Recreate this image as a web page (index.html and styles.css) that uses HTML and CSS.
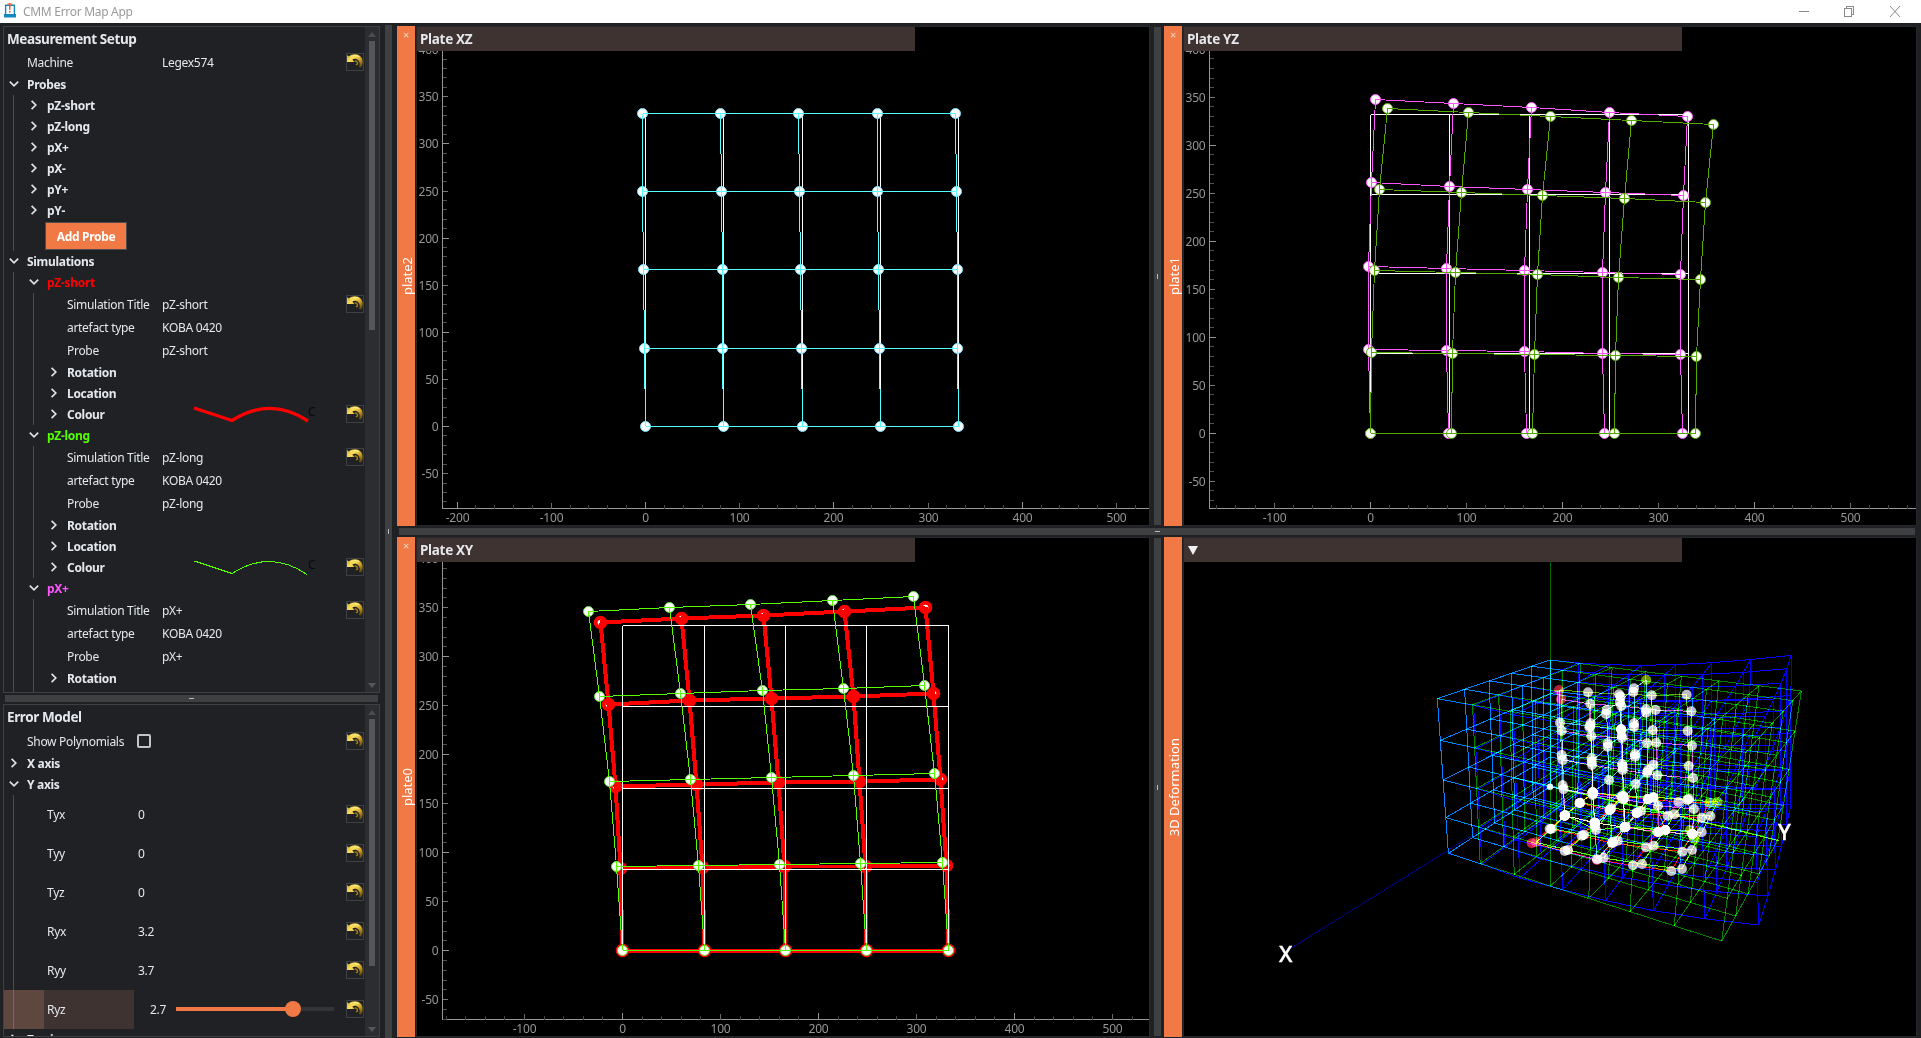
FILE: index.html
```html
<!DOCTYPE html>
<html lang="en">
<head>
<meta charset="utf-8">
<title>CMM Error Map App</title>
<link rel="stylesheet" href="styles.css">
</head>
<body>
<svg class="defs" width="0" height="0">
  <defs>
    <linearGradient id="gold" x1="0" y1="0" x2="1" y2="1">
      <stop offset="0" stop-color="#d9a91c"/><stop offset=".35" stop-color="#f9de5e"/><stop offset=".65" stop-color="#c9991a"/><stop offset="1" stop-color="#3a2c0c"/>
    </linearGradient>
    <symbol id="undo" viewBox="0 0 16 16">
      <path d="M0 1 L1.800 2.600 C5 -.6 10.500 -.6 13.500 2.400 C16.400 5.600 16.400 10.500 14 13.500 L12 13 C13.600 10 12.600 6.600 9.800 5.200 C8.400 4.500 6.600 4.600 5.400 5.600 L7.400 8 L0 8 Z" fill="url(#gold)"/>
      <path d="M3.200 3.200 C6 1 10 1 12.200 3.200" fill="none" stroke="#ffee8a" stroke-width="1"/>
      <path d="M7.600 7.200 C9.600 6.600 11 8.400 10.400 10 L9 11" fill="none" stroke="#a27b16" stroke-width="1.500"/>
    </symbol>
    <symbol id="down" viewBox="0 0 10 10"><path d="M.8 2.6 L5 6.8 L9.2 2.6" fill="none" stroke="#e0e1e3" stroke-width="1.7"/></symbol>
    <symbol id="right" viewBox="0 0 10 10"><path d="M2.6 .8 L6.8 5 L2.6 9.2" fill="none" stroke="#e0e1e3" stroke-width="1.7"/></symbol>
  </defs>
</svg>

<header class="titlebar">
  <svg class="appicon" width="12" height="15" viewBox="0 0 12 15">
    <path d="M0 11h12v3.5H0z" fill="#1689c0"/><path d="M1.6 11V2.2h8.8V11" fill="none" stroke="#1689c0" stroke-width="1.4"/>
    <path d="M4.9 0h1.8l-.3 7h-1.2zM5 8h1.6v1.6H5z" fill="#e8502a"/><path d="M3.4 1.2h4.8" stroke="#f07945" stroke-width="1.6"/>
  </svg>
  <span class="apptitle">CMM Error Map App</span>
  <svg class="winbtns" width="102" height="14" viewBox="0 0 102 14" fill="none" stroke="#8a8a8a" shape-rendering="crispEdges">
    <path d="M0 7.5h10"/><path d="M45.5 4.500h7v8h-7zM47.500 4.500v-2h7v8h-2"/><path d="M91 2l10 11M101 2l-10 11" shape-rendering="auto"/>
  </svg>
</header>

<main class="workspace">
  <section class="side">
    <div class="box setup">
      <div class="tree">
        <h2>Measurement Setup</h2>
        <div class="row"><span class="name">Machine</span><span>Legex574</span><svg class="undo"><use href="#undo"/></svg></div>
        <div class="group"><svg class="chev"><use href="#down"/></svg>Probes</div>
        <div class="kids">
          <div class="group"><svg class="chev"><use href="#right"/></svg>pZ-short</div>
          <div class="group"><svg class="chev"><use href="#right"/></svg>pZ-long</div>
          <div class="group"><svg class="chev"><use href="#right"/></svg>pX+</div>
          <div class="group"><svg class="chev"><use href="#right"/></svg>pX-</div>
          <div class="group"><svg class="chev"><use href="#right"/></svg>pY+</div>
          <div class="group"><svg class="chev"><use href="#right"/></svg>pY-</div>
          <div class="btnrow"><button class="add">Add Probe</button></div>
        </div>
        <div class="group"><svg class="chev"><use href="#down"/></svg>Simulations</div>
        <div class="kids">
          <div class="group red"><svg class="chev"><use href="#down"/></svg>pZ-short</div>
          <div class="kids deep">
            <div class="row"><span class="name">Simulation Title</span><span>pZ-short</span><svg class="undo"><use href="#undo"/></svg></div>
            <div class="row"><span class="name">artefact type</span><span>KOBA 0420</span></div>
            <div class="row"><span class="name">Probe</span><span>pZ-short</span></div>
            <div class="group"><svg class="chev"><use href="#right"/></svg>Rotation</div>
            <div class="group"><svg class="chev"><use href="#right"/></svg>Location</div>
            <div class="group"><svg class="chev"><use href="#right"/></svg><span class="name">Colour</span><svg class="pen" width="118" height="18" viewBox="0 0 118 18"><path d="M2 3 L40 15.500 Q78 -9 116 16" fill="none" stroke="#f00" stroke-width="3.400"/></svg><span class="pen-c">C</span><svg class="undo"><use href="#undo"/></svg></div>
          </div>
          <div class="group green"><svg class="chev"><use href="#down"/></svg>pZ-long</div>
          <div class="kids deep">
            <div class="row"><span class="name">Simulation Title</span><span>pZ-long</span><svg class="undo"><use href="#undo"/></svg></div>
            <div class="row"><span class="name">artefact type</span><span>KOBA 0420</span></div>
            <div class="row"><span class="name">Probe</span><span>pZ-long</span></div>
            <div class="group"><svg class="chev"><use href="#right"/></svg>Rotation</div>
            <div class="group"><svg class="chev"><use href="#right"/></svg>Location</div>
            <div class="group"><svg class="chev"><use href="#right"/></svg><span class="name">Colour</span><svg class="pen" width="118" height="18" viewBox="0 0 118 18" shape-rendering="crispEdges"><path d="M2.500 3 L40 15.500 Q78 -9 115 16.500" fill="none" stroke="#5f0" stroke-width="1"/></svg><span class="pen-c">C</span><svg class="undo"><use href="#undo"/></svg></div>
          </div>
          <div class="group pink"><svg class="chev"><use href="#down"/></svg>pX+</div>
          <div class="kids deep">
            <div class="row"><span class="name">Simulation Title</span><span>pX+</span><svg class="undo"><use href="#undo"/></svg></div>
            <div class="row"><span class="name">artefact type</span><span>KOBA 0420</span></div>
            <div class="row"><span class="name">Probe</span><span>pX+</span></div>
            <div class="group"><svg class="chev"><use href="#right"/></svg>Rotation</div>
            <div class="group"></div>
          </div>
        </div>
      </div>
      <div class="scroll"><i class="up"></i><b class="thumb t1"></b><i class="dn"></i></div>
    </div>
    <div class="hsplit"><i></i></div>
    <div class="box model">
      <div class="tree">
        <h2>Error Model</h2>
        <div class="row"><span class="name">Show Polynomials</span><span class="check"></span><svg class="undo"><use href="#undo"/></svg></div>
        <div class="group"><svg class="chev"><use href="#right"/></svg>X axis</div>
        <div class="group"><svg class="chev"><use href="#down"/></svg>Y axis</div>
        <div class="kids">
          <div class="row tall"><span class="name">Tyx</span><span>0</span><svg class="undo"><use href="#undo"/></svg></div>
          <div class="row tall"><span class="name">Tyy</span><span>0</span><svg class="undo"><use href="#undo"/></svg></div>
          <div class="row tall"><span class="name">Tyz</span><span>0</span><svg class="undo"><use href="#undo"/></svg></div>
          <div class="row tall"><span class="name">Ryx</span><span>3.2</span><svg class="undo"><use href="#undo"/></svg></div>
          <div class="row tall"><span class="name">Ryy</span><span>3.7</span><svg class="undo"><use href="#undo"/></svg></div>
          <div class="row tall selected"><span class="name">Ryz</span><span class="num">2.7</span><span class="slider"><i class="fill"></i><i class="knob"></i></span><svg class="undo"><use href="#undo"/></svg></div>
        </div>
        <div class="group"><svg class="chev"><use href="#right"/></svg>Z axis</div>
      </div>
      <div class="scroll"><i class="up"></i><b class="thumb t2"></b><i class="dn"></i></div>
    </div>
  </section>
  <div class="vsplit main"><i></i></div>
  <section class="docks">
    <div class="dockrow">
      <article class="dock"><div class="tab"><span class="x">×</span><span class="label">plate2</span></div>
        <div class="view"><svg id="xz" viewBox="417 27 732 498"></svg><div class="caption">Plate XZ</div></div></article>
      <div class="vsplit"><i></i></div>
      <article class="dock"><div class="tab"><span class="x">×</span><span class="label">plate1</span></div>
        <div class="view"><svg id="yz" viewBox="1184 27 732 498"></svg><div class="caption">Plate YZ</div></div></article>
    </div>
    <div class="hsplit wide"><i></i></div>
    <div class="dockrow">
      <article class="dock"><div class="tab"><span class="x">×</span><span class="label">plate0</span></div>
        <div class="view"><svg id="xy" viewBox="417 538 732 498"></svg><div class="caption">Plate XY</div></div></article>
      <div class="vsplit"><i></i></div>
      <article class="dock"><div class="tab"><span class="label">3D Deformation</span></div>
        <div class="view"><svg id="space" class="space" viewBox="1184 538 732 498"></svg><div class="caption"><i class="tri"></i></div></div></article>
    </div>
  </section>
</main>
<script src="plots.js"></script>
</body>
</html>
```
FILE: styles.css
```css
* { box-sizing: border-box; }
body { margin: 0; width: 1921px; height: 1038px; overflow: hidden; background: #202124; color: #e4e7eb; font: 12px/15px "Noto Sans", "Open Sans", sans-serif; letter-spacing: -0.3px; }
.defs { position: absolute; }
.titlebar { height: 23px; background: #fff; display: flex; align-items: center; padding: 0 20px 0 4px; }
.appicon { margin-right: 7px; margin-top: -2px; }
.apptitle { color: #999; flex: 1; }
.winbtns { display: block; margin-top: -2px; }

.workspace { display: flex; height: 1015px; padding: 3px 0 0 3px; }
.side { width: 377px; display: flex; flex-direction: column; }
.box { border: 1px solid #3f4042; display: flex; overflow: hidden; }
.setup { height: 667px; --col: 135px; }
.model { height: 333px; --col: 111px; margin-top: 2px; }
.model h2 { height: 25px; }
.tree { flex: 1; min-width: 0; }
h2 { margin: 0; font-size: 13.500px; line-height: 24px; height: 24px; padding-left: 3px; font-weight: 700; letter-spacing: -0.4px; }
.row, .group { display: flex; align-items: center; white-space: nowrap; padding-bottom: 1px; }
.row { height: 23px; padding-left: 23px; }
.tall { height: 39px; }
.group { height: 21px; padding-left: 5px; font-weight: 700; }
.name { width: var(--col); flex: none; }
.chev { width: 10px; height: 10px; margin-right: 8px; flex: none; }
.undo { width: 18px; height: 18px; margin: 0 1px 0 auto; border: 1px solid #3f4042; flex: none; }
.kids { margin-left: 9px; padding-left: 10px; border-left: 1px solid #4b4c4e; }
.kids .name { width: calc(var(--col) - 20px); }
.deep .name { width: calc(var(--col) - 40px); }
.btnrow { height: 30px; padding: 1px 0 0 21px; }
.add { display: block; width: 82px; height: 28px; border: 1px solid #4b4c4e; background: #f07945; color: #fff; font: inherit; letter-spacing: inherit; font-weight: 700; padding: 0; }
.red { color: #f00; }
.green { color: #5f0; }
.pink { color: #ff55ff; }
.pen { margin-left: 30px; flex: none; }
.pen-c { color: #08090a; font-weight: 400; margin: -6px 0 0 -2px; }
.check { width: 14px; height: 14px; border: 2px solid #c2c4c8; border-radius: 2px; margin-left: -1px; }
.selected { margin-left: -20px; padding-left: 43px; background: linear-gradient(90deg, rgba(239,160,126,.3) 40px, #3f3331 40px) no-repeat 0 0 / 130px 100%; }
.num { width: 38px; padding-left: 12px; }
.slider { position: relative; width: 158px; height: 4px; background: #333437; }
.slider .fill { display: block; width: 117px; height: 4px; background: #f07945; }
.slider .knob { position: absolute; left: 109px; top: -6px; width: 16px; height: 16px; border-radius: 50%; background: #f07945; }
.scroll { width: 14px; background: #2c2d30; display: flex; flex-direction: column; align-items: center; padding: 5px 0 4px; }
.up, .dn { border: 4px solid transparent; }
.up { border-bottom-color: #4b4c4f; border-top: 0; border-bottom-width: 5px; }
.dn { border-top-color: #55565a; border-bottom: 0; border-top-width: 5px; margin-top: auto; }
.thumb { width: 6px; background: #55565a; margin-top: 4px; }
.t1 { height: 289px; }
.t2 { height: 247px; }
.hsplit, .vsplit { background: #3f4042; display: flex; align-items: center; justify-content: center; flex: none; }
.hsplit { height: 7px; margin: 2px 2px 0; }
.hsplit i { width: 5px; height: 1px; background: #b5b7ba; }
.vsplit { width: 7px; }
.vsplit i { width: 1px; height: 5px; background: #b5b7ba; }
.vsplit.main { margin: -1px 5px 0; }

.docks { width: 1520px; flex: none; }
.dockrow { display: flex; height: 500px; justify-content: space-between; }
.dockrow .vsplit { margin: 1px 0 1px 1px; }
.hsplit.wide { margin: 2px; }
.dock { width: 753px; display: flex; }
.tab { width: 18px; background: #f07945; position: relative; display: flex; align-items: center; justify-content: center; }
.label { writing-mode: vertical-rl; transform: rotate(180deg); font-size: 13px; letter-spacing: 0; color: #fff; line-height: 16px; padding-right: 1px; }
.x { position: absolute; top: 1px; left: 6px; font-size: 11px; color: #f8d8c8; }
.view { position: relative; flex: 1; margin-left: 1px; background: #000; border: 1px solid #26272a; }
.view svg { display: block; width: 732px; height: 498px; }
.caption { position: absolute; left: 0; top: 0; width: 498px; height: 24px; background: #3f3331; font-size: 13.500px; font-weight: 700; line-height: 24px; padding-left: 3px; }
.tri { display: block; margin: 8px 0 0 1px; width: 0; border: 5px solid transparent; border-top: 9px solid #eef0f2; border-bottom: 0; }
.axis { fill: none; stroke: #969696; }
.tick { font-size: 12px; fill: #969696; letter-spacing: -0.2px; }
.crisp { shape-rendering: crispEdges; }
.space .wire, .space .ball { mix-blend-mode: plus-lighter; fill: none; }
.letter { font-size: 22px; font-weight: 500; fill: #fff; stroke: #fff; stroke-width: .4px; letter-spacing: 0; }
```
FILE: plots.js
```js
const NS = "http://www.w3.org/2000/svg";
function add(parent, tag, attrs, text) {
  const e = document.createElementNS(NS, tag);
  for (const k in attrs) e.setAttribute(k, attrs[k]);
  if (text !== undefined) e.textContent = text;
  parent.appendChild(e);
  return e;
}
// measured coordinates are stored in thirds of a pixel
const grid = (ox, oy, rows) => rows.map(r => r.map(p => [ox + Math.floor(p[0] / 3) + .5, oy + Math.floor(p[1] / 3) + .5]));
const lattice = (ox, oy, xs, ys) => grid(ox, oy, ys.map(y => xs.map(x => [x, y])));
const path = pts => "M" + pts.map(p => p[0].toFixed(1) + " " + p[1].toFixed(1)).join("L");

function mesh(svg, g, color, width, cls) {
  const lines = g.concat(g[0].map((_, i) => g.map(r => r[i])));
  if (cls) lines.forEach(l => add(svg, "path", { d: path(l), stroke: color, "stroke-width": width, class: cls }));
  else add(svg, "path", { d: lines.map(path).join(""), stroke: color, "stroke-width": width, fill: "none", class: "crisp" });
}
function dots(svg, g, color, width) {
  g.flat().forEach(p => add(svg, "circle", { cx: p[0], cy: p[1], r: width > 1 ? 4.8 : 5, fill: "#fff", stroke: color, "stroke-width": width }));
}
function axes(svg, o) {
  const g = add(svg, "g", {});
  add(g, "path", { d: `M${o.left} 27V${o.bottom}H${o.right}`, class: "axis crisp" });
  for (let v = -220; v <= 600; v += 20) {
    const x = Math.floor(o.x0 + v * o.s) + .5;
    if (x < o.left || x > o.right) continue;
    const big = v % 200 === 0, mid = v % 100 === 0;
    add(g, "path", { d: `M${x} ${o.bottom}v${big ? -7 : mid ? -6 : -4}`, stroke: big ? "#969696" : mid ? "#6a6a6a" : "#444", class: "crisp" });
    if (mid) add(g, "text", { x: x, y: o.bottom + 13.5, "text-anchor": "middle", class: "tick" }, v);
  }
  for (let v = -90; v <= 450; v += 10) {
    const y = Math.floor(o.y0 - v * o.s) + .5;
    if (y > o.bottom || y < o.bottom - 465) continue;
    const big = v % 100 === 0, mid = v % 50 === 0;
    add(g, "path", { d: `M${o.left} ${y}h${big ? 6 : mid ? 5 : 4}`, stroke: big ? "#969696" : mid ? "#777" : "#505050", class: "crisp" });
    if (mid) add(g, "text", { x: o.left - 4, y: y + 4.5, "text-anchor": "end", class: "tick" }, v);
  }
}

const xz = document.getElementById("xz");
axes(xz, { left: 442.5, bottom: 508.5, right: 1149, x0: 645.5, y0: 426.5, s: .942 });
mesh(xz, lattice(620, 90, [76, 310, 547, 781, 1015], [70, 304, 538, 775, 1009]), "#fff", 1);
const cyan = grid(620, 90, [
  [[67,70],[301,70],[535,70],[772,70],[1006,70]],
  [[67,304],[304,304],[538,304],[772,304],[1009,304]],
  [[70,538],[307,538],[541,538],[775,538],[1012,538]],
  [[73,775],[307,775],[544,775],[778,775],[1012,775]],
  [[76,1009],[310,1009],[547,1009],[781,1009],[1015,1009]]]);
dots(xz, cyan, "#7df", 1);
mesh(xz, cyan, "#55ffff", 1);

const yz = document.getElementById("yz");
axes(yz, { left: 1209.5, bottom: 508.5, right: 1916, x0: 1370.3, y0: 433.3, s: .96 });
mesh(yz, lattice(1350, 80, [61, 298, 538, 778, 1015], [103, 343, 580, 820, 1060]), "#fff", 1);
const pink = grid(1350, 80, [
  [[76,58],[310,70],[544,82],[778,97],[1012,109]],
  [[64,307],[298,319],[532,328],[766,337],[1000,346]],
  [[55,559],[289,565],[523,571],[757,577],[991,583]],
  [[55,808],[289,811],[523,814],[757,820],[991,823]],
  [[61,1060],[295,1060],[529,1060],[763,1060],[997,1060]]]);
const olive = grid(1350, 80, [
  [[112,85],[355,97],[601,109],[844,121],[1090,133]],
  [[88,328],[334,337],[577,346],[823,355],[1066,367]],
  [[73,571],[316,577],[562,583],[805,592],[1051,598]],
  [[64,817],[307,820],[553,823],[796,826],[1039,829]],
  [[61,1060],[304,1060],[547,1060],[793,1060],[1036,1060]]]);
dots(yz, pink, "#f5f", 1);
mesh(yz, pink, "#ff55ff", 1);
dots(yz, olive, "#5a0", 1);
mesh(yz, olive, "#55aa00", 1);

const xy = document.getElementById("xy");
axes(xy, { left: 442.5, bottom: 1019.5, right: 1149, x0: 622.4, y0: 950.7, s: .98 });
const bottom = [[188,1111],[433,1111],[676,1111],[920,1111],[1165,1111]];
const red = grid(560, 580, [
  [[120,127],[363,115],[609,106],[852,94],[1095,82]],
  [[144,373],[388,362],[633,356],[879,348],[1121,339]],
  [[165,620],[409,614],[654,608],[897,603],[1141,598]],
  [[181,866],[427,863],[672,860],[915,858],[1158,856]], bottom]);
const lime = grid(560, 580, [
  [[85,95],[328,83],[571,74],[817,62],[1060,50]],
  [[118,350],[361,341],[607,332],[850,326],[1093,317]],
  [[148,605],[391,599],[634,593],[880,587],[1123,581]],
  [[169,860],[415,857],[658,854],[901,851],[1147,848]], bottom]);
dots(xy, red, "#f00", 4);
mesh(xy, red, "#f00", 4);
mesh(xy, lattice(560, 580, [187, 433, 676, 919, 1165], [136, 379, 625, 868, 1111]), "#fff", 1);
dots(xy, lime, "#6d4", 1);
mesh(xy, lime, "#55ff00", 1);

// perspective view: 5 x 7 x 4 cell volume, nominal (green) and deformed (blue)
const space = document.getElementById("space");
const at = p => [1420 + p[0] / 3, 630 + p[1] / 3];
function project(x, y, z) {
  const w = 1 - .2005 * x - .166 * y - .078 * z;
  return [(390 - 322 * x + 505.5 * y - 30.4 * z) / w, (470 + 65.7 * x + 55.4 * y - 387 * z) / w];
}
const frontX = [0, 5, 17, 37, 50, 70, 92, 111], frontY = [0, 2, 11, 11, 7, -3, -21, -48];
function deform(x, j, z) {
  const y = j / 7, p = project(x, y, z), q = y * y;
  const dx = (1 - x) * ((1 - z) * 39 * q - z * 30 * y) + x * (frontX[j] - z * 83 * q);
  const dy = (1 - x) * -107 * q + x * (frontY[j] - z * 2 * q);
  return [p[0] + dx, p[1] + dy];
}
function volume(f, color) {
  const line = pts => add(space, "path", { d: path(pts.map(at)), stroke: color, class: "wire crisp" });
  const run = n => [...Array(n + 1).keys()];
  for (const i of run(5)) for (const k of run(4)) line(run(7).map(j => f(i / 5, j, k / 4)));
  for (const j of run(7)) for (const k of run(4)) line(run(5).map(i => f(i / 5, j, k / 4)));
  for (const i of run(5)) for (const j of run(7)) line(run(4).map(k => f(i / 5, j, k / 4)));
}
add(space, "path", { d: path([[390, 470], [-405, 966]].map(at)), stroke: "#000080", class: "wire crisp" });
add(space, "path", { d: path([[390, 470], [390, -290]].map(at)), stroke: "#006400", class: "wire crisp" });
volume((x, j, z) => project(x, j / 7, z), "#008200");
volume(deform, "#0000ff");
add(space, "path", { d: path([[390, 470], [740, 548], [1076, 632]].map(at)), stroke: "#6fff00", class: "wire crisp" });

const plates = [
  ["#cc50cc", [
    [[423,208],[511,222],[604,228],[707,240],[814,244]],
    [[425,302],[514,318],[606,324],[709,338],[816,347]],
    [[428,390],[516,405],[608,420],[712,436],[819,444]],
    [[431,478],[518,495],[611,508],[714,527],[822,537]],
    [[434,557],[524,578],[614,592],[716,606],[817,612]]]],
  ["#55aa00", [
    [[417,180],[504,187],[597,193],[695,196],[800,194]],
    [[420,278],[511,288],[603,298],[698,301],[803,303]],
    [[425,375],[515,385],[606,402],[700,404],[806,408]],
    [[428,466],[518,487],[608,500],[700,503],[806,506]],
    [[434,557],[524,578],[614,592],[736,600],[810,600]]]],
  ["#55cccc", [
    [[679,150],[642,175],[600,215],[560,240],[512,280]],
    [[678,248],[642,280],[605,315],[563,350],[515,395]],
    [[681,340],[645,372],[608,410],[567,450],[518,487]],
    [[681,428],[647,462],[611,505],[570,540],[524,588]],
    [[683,507],[650,548],[614,592],[577,636],[531,688]]]],
  ["#f00", [
    [[335,640],[434,663],[531,690],[639,706],[754,723]],
    [[389,597],[485,617],[577,640],[678,652],[787,665]],
    [[434,557],[524,578],[614,592],[712,606],[817,612]],
    [[478,520],[568,540],[650,550],[743,557],[845,563]],
    [[518,490],[604,500],[685,507],[775,516],[868,518]]]],
  ["#55ff00", [
    [[348,637],[444,660],[551,684],[666,702],[786,717]],
    [[395,596],[492,614],[593,632],[701,647],[816,660]],
    [[436,555],[528,600],[617,590],[736,600],[845,607]],
    [[481,518],[574,535],[663,543],[763,553],[871,558]],
    [[520,488],[610,497],[700,501],[803,510],[893,516]]]]];
const tint = { "417,180": "#b02038", "423,208": "#b83048", "335,640": "#c02040", "348,637": "#90203a", "531,690": "#c02040",
  "679,150": "#6a9a00", "868,518": "#6aa800", "893,516": "#6a9a00", "810,600": "#6a9a00" };
plates.forEach(([color, rows]) => mesh(space, rows.map(r => r.map(at)), color, 1, "wire crisp"));
plates.forEach(([, rows]) => rows.flat().forEach(p => {
  const c = at(p);
  add(space, "circle", { cx: c[0], cy: c[1], r: 5, style: `fill:${tint[p] || "#bdbdbd"}`, class: "ball" });
}));
[[640,186],[558,252],[508,292],[602,200],[604,298],[678,238],[642,290],[563,340],[684,420],[645,380],[824,627]].forEach(p => { const c = at(p);
  add(space, "circle", { cx: c[0], cy: c[1], r: 5, style: `fill:${p[0] === 824 ? "#6aa800" : "#bdbdbd"}`, class: "ball" }); });
const o = at([390, 470]);
add(space, "circle", { cx: o[0], cy: o[1], r: 3.2, style: "fill:#e0ffff" });
add(space, "text", { x: 1778, y: 840, class: "letter" }, "Y");
add(space, "text", { x: 1279, y: 962, class: "letter" }, "X");
add(space, "rect", { x: 1556, y: 538, width: 4, height: 1, fill: "#fff" });
```
